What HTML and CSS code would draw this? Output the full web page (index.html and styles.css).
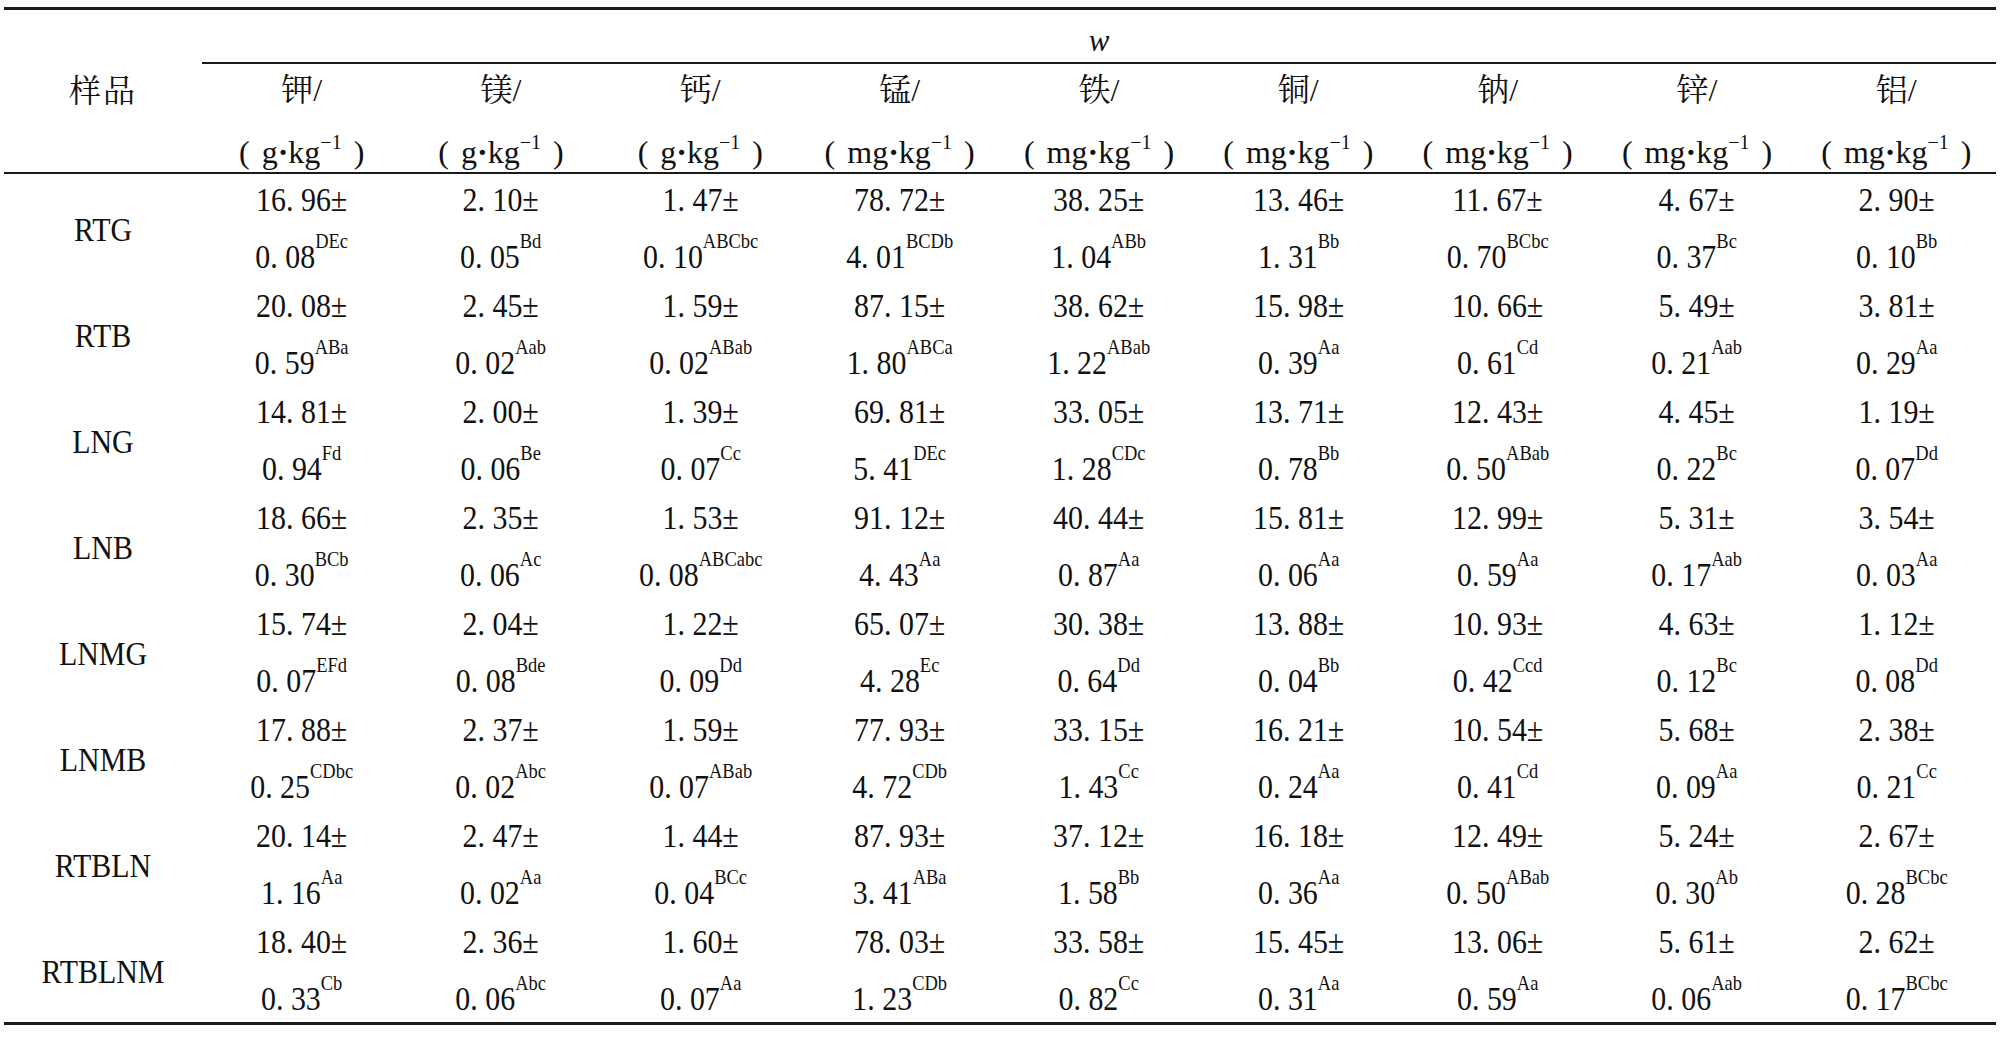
FILE: index.html
```html
<!DOCTYPE html>
<html lang="zh-CN">
<head>
<meta charset="utf-8">
<title>样品元素含量</title>
<link rel="stylesheet" href="styles.css">
</head>
<body>
<div class="tbl">
  <div class="corner">样品</div>
  <div class="wcell"><i>w</i></div>

  <div class="el">钾/</div>
  <div class="el">镁/</div>
  <div class="el">钙/</div>
  <div class="el">锰/</div>
  <div class="el">铁/</div>
  <div class="el">铜/</div>
  <div class="el">钠/</div>
  <div class="el">锌/</div>
  <div class="el">铝/</div>

  <div class="unit">( g<b class="dot">·</b>kg<sup>−1</sup> )</div>
  <div class="unit">( g<b class="dot">·</b>kg<sup>−1</sup> )</div>
  <div class="unit">( g<b class="dot">·</b>kg<sup>−1</sup> )</div>
  <div class="unit">( mg<b class="dot">·</b>kg<sup>−1</sup> )</div>
  <div class="unit">( mg<b class="dot">·</b>kg<sup>−1</sup> )</div>
  <div class="unit">( mg<b class="dot">·</b>kg<sup>−1</sup> )</div>
  <div class="unit">( mg<b class="dot">·</b>kg<sup>−1</sup> )</div>
  <div class="unit">( mg<b class="dot">·</b>kg<sup>−1</sup> )</div>
  <div class="unit">( mg<b class="dot">·</b>kg<sup>−1</sup> )</div>

  <div class="name">RTG</div>
  <div class="val"><div class="l1">16. 96±</div><div class="l2">0. 08<sup>DEc</sup></div></div>
  <div class="val"><div class="l1">2. 10±</div><div class="l2">0. 05<sup>Bd</sup></div></div>
  <div class="val"><div class="l1">1. 47±</div><div class="l2">0. 10<sup>ABCbc</sup></div></div>
  <div class="val"><div class="l1">78. 72±</div><div class="l2">4. 01<sup>BCDb</sup></div></div>
  <div class="val"><div class="l1">38. 25±</div><div class="l2">1. 04<sup>ABb</sup></div></div>
  <div class="val"><div class="l1">13. 46±</div><div class="l2">1. 31<sup>Bb</sup></div></div>
  <div class="val"><div class="l1">11. 67±</div><div class="l2">0. 70<sup>BCbc</sup></div></div>
  <div class="val"><div class="l1">4. 67±</div><div class="l2">0. 37<sup>Bc</sup></div></div>
  <div class="val"><div class="l1">2. 90±</div><div class="l2">0. 10<sup>Bb</sup></div></div>

  <div class="name">RTB</div>
  <div class="val"><div class="l1">20. 08±</div><div class="l2">0. 59<sup>ABa</sup></div></div>
  <div class="val"><div class="l1">2. 45±</div><div class="l2">0. 02<sup>Aab</sup></div></div>
  <div class="val"><div class="l1">1. 59±</div><div class="l2">0. 02<sup>ABab</sup></div></div>
  <div class="val"><div class="l1">87. 15±</div><div class="l2">1. 80<sup>ABCa</sup></div></div>
  <div class="val"><div class="l1">38. 62±</div><div class="l2">1. 22<sup>ABab</sup></div></div>
  <div class="val"><div class="l1">15. 98±</div><div class="l2">0. 39<sup>Aa</sup></div></div>
  <div class="val"><div class="l1">10. 66±</div><div class="l2">0. 61<sup>Cd</sup></div></div>
  <div class="val"><div class="l1">5. 49±</div><div class="l2">0. 21<sup>Aab</sup></div></div>
  <div class="val"><div class="l1">3. 81±</div><div class="l2">0. 29<sup>Aa</sup></div></div>

  <div class="name">LNG</div>
  <div class="val"><div class="l1">14. 81±</div><div class="l2">0. 94<sup>Fd</sup></div></div>
  <div class="val"><div class="l1">2. 00±</div><div class="l2">0. 06<sup>Be</sup></div></div>
  <div class="val"><div class="l1">1. 39±</div><div class="l2">0. 07<sup>Cc</sup></div></div>
  <div class="val"><div class="l1">69. 81±</div><div class="l2">5. 41<sup>DEc</sup></div></div>
  <div class="val"><div class="l1">33. 05±</div><div class="l2">1. 28<sup>CDc</sup></div></div>
  <div class="val"><div class="l1">13. 71±</div><div class="l2">0. 78<sup>Bb</sup></div></div>
  <div class="val"><div class="l1">12. 43±</div><div class="l2">0. 50<sup>ABab</sup></div></div>
  <div class="val"><div class="l1">4. 45±</div><div class="l2">0. 22<sup>Bc</sup></div></div>
  <div class="val"><div class="l1">1. 19±</div><div class="l2">0. 07<sup>Dd</sup></div></div>

  <div class="name">LNB</div>
  <div class="val"><div class="l1">18. 66±</div><div class="l2">0. 30<sup>BCb</sup></div></div>
  <div class="val"><div class="l1">2. 35±</div><div class="l2">0. 06<sup>Ac</sup></div></div>
  <div class="val"><div class="l1">1. 53±</div><div class="l2">0. 08<sup>ABCabc</sup></div></div>
  <div class="val"><div class="l1">91. 12±</div><div class="l2">4. 43<sup>Aa</sup></div></div>
  <div class="val"><div class="l1">40. 44±</div><div class="l2">0. 87<sup>Aa</sup></div></div>
  <div class="val"><div class="l1">15. 81±</div><div class="l2">0. 06<sup>Aa</sup></div></div>
  <div class="val"><div class="l1">12. 99±</div><div class="l2">0. 59<sup>Aa</sup></div></div>
  <div class="val"><div class="l1">5. 31±</div><div class="l2">0. 17<sup>Aab</sup></div></div>
  <div class="val"><div class="l1">3. 54±</div><div class="l2">0. 03<sup>Aa</sup></div></div>

  <div class="name">LNMG</div>
  <div class="val"><div class="l1">15. 74±</div><div class="l2">0. 07<sup>EFd</sup></div></div>
  <div class="val"><div class="l1">2. 04±</div><div class="l2">0. 08<sup>Bde</sup></div></div>
  <div class="val"><div class="l1">1. 22±</div><div class="l2">0. 09<sup>Dd</sup></div></div>
  <div class="val"><div class="l1">65. 07±</div><div class="l2">4. 28<sup>Ec</sup></div></div>
  <div class="val"><div class="l1">30. 38±</div><div class="l2">0. 64<sup>Dd</sup></div></div>
  <div class="val"><div class="l1">13. 88±</div><div class="l2">0. 04<sup>Bb</sup></div></div>
  <div class="val"><div class="l1">10. 93±</div><div class="l2">0. 42<sup>Ccd</sup></div></div>
  <div class="val"><div class="l1">4. 63±</div><div class="l2">0. 12<sup>Bc</sup></div></div>
  <div class="val"><div class="l1">1. 12±</div><div class="l2">0. 08<sup>Dd</sup></div></div>

  <div class="name">LNMB</div>
  <div class="val"><div class="l1">17. 88±</div><div class="l2">0. 25<sup>CDbc</sup></div></div>
  <div class="val"><div class="l1">2. 37±</div><div class="l2">0. 02<sup>Abc</sup></div></div>
  <div class="val"><div class="l1">1. 59±</div><div class="l2">0. 07<sup>ABab</sup></div></div>
  <div class="val"><div class="l1">77. 93±</div><div class="l2">4. 72<sup>CDb</sup></div></div>
  <div class="val"><div class="l1">33. 15±</div><div class="l2">1. 43<sup>Cc</sup></div></div>
  <div class="val"><div class="l1">16. 21±</div><div class="l2">0. 24<sup>Aa</sup></div></div>
  <div class="val"><div class="l1">10. 54±</div><div class="l2">0. 41<sup>Cd</sup></div></div>
  <div class="val"><div class="l1">5. 68±</div><div class="l2">0. 09<sup>Aa</sup></div></div>
  <div class="val"><div class="l1">2. 38±</div><div class="l2">0. 21<sup>Cc</sup></div></div>

  <div class="name">RTBLN</div>
  <div class="val"><div class="l1">20. 14±</div><div class="l2">1. 16<sup>Aa</sup></div></div>
  <div class="val"><div class="l1">2. 47±</div><div class="l2">0. 02<sup>Aa</sup></div></div>
  <div class="val"><div class="l1">1. 44±</div><div class="l2">0. 04<sup>BCc</sup></div></div>
  <div class="val"><div class="l1">87. 93±</div><div class="l2">3. 41<sup>ABa</sup></div></div>
  <div class="val"><div class="l1">37. 12±</div><div class="l2">1. 58<sup>Bb</sup></div></div>
  <div class="val"><div class="l1">16. 18±</div><div class="l2">0. 36<sup>Aa</sup></div></div>
  <div class="val"><div class="l1">12. 49±</div><div class="l2">0. 50<sup>ABab</sup></div></div>
  <div class="val"><div class="l1">5. 24±</div><div class="l2">0. 30<sup>Ab</sup></div></div>
  <div class="val"><div class="l1">2. 67±</div><div class="l2">0. 28<sup>BCbc</sup></div></div>

  <div class="name">RTBLNM</div>
  <div class="val"><div class="l1">18. 40±</div><div class="l2">0. 33<sup>Cb</sup></div></div>
  <div class="val"><div class="l1">2. 36±</div><div class="l2">0. 06<sup>Abc</sup></div></div>
  <div class="val"><div class="l1">1. 60±</div><div class="l2">0. 07<sup>Aa</sup></div></div>
  <div class="val"><div class="l1">78. 03±</div><div class="l2">1. 23<sup>CDb</sup></div></div>
  <div class="val"><div class="l1">33. 58±</div><div class="l2">0. 82<sup>Cc</sup></div></div>
  <div class="val"><div class="l1">15. 45±</div><div class="l2">0. 31<sup>Aa</sup></div></div>
  <div class="val"><div class="l1">13. 06±</div><div class="l2">0. 59<sup>Aa</sup></div></div>
  <div class="val"><div class="l1">5. 61±</div><div class="l2">0. 06<sup>Aab</sup></div></div>
  <div class="val"><div class="l1">2. 62±</div><div class="l2">0. 17<sup>BCbc</sup></div></div>
</div>
</body>
</html>
```

FILE: styles.css
```css
html, body {
  background: #ffffff;
}
body {
  margin: 7px 4px 0 4px;
  font-family: "Liberation Serif", "Noto Serif CJK SC", "Noto Sans CJK SC", serif;
  font-size: 31px;
  color: #111111;
}
.tbl {
  width: 1992px;
  display: grid;
  grid-template-columns: 198px repeat(9, 1fr);
  grid-template-rows: 54px 54px 56px;
  grid-auto-rows: 106px;
  border-top: 3px solid #1a1a1a;
  border-bottom: 3px solid #1a1a1a;
}
.corner {
  grid-column: 1;
  grid-row: 1 / span 3;
  display: flex;
  align-items: center;
  justify-content: center;
  border-bottom: 2px solid #1a1a1a;
  font-family: "Noto Serif CJK SC", "Noto Sans CJK SC", serif;
  font-size: 32px;
  letter-spacing: 2px;
  padding-bottom: 6px;
  box-sizing: border-box;
}
.wcell {
  grid-column: 2 / -1;
  grid-row: 1;
  box-sizing: border-box;
  padding-top: 10px;
  line-height: 42px;
  text-align: center;
  border-bottom: 2px solid #1a1a1a;
}
.wcell i {
  font-style: italic;
}
.el {
  grid-row: 2;
  line-height: 52px;
  text-align: center;
  font-size: 32px;
}
.unit {
  grid-row: 3;
  box-sizing: border-box;
  padding-top: 14px;
  line-height: 40px;
  text-align: center;
  border-bottom: 2px solid #1a1a1a;
  white-space: nowrap;
  font-size: 32px;
  word-spacing: 4px;
}
.unit .dot {
  font-weight: bold;
}
.unit sup {
  font-size: 20px;
  line-height: 0;
  vertical-align: 14px;
}
.name {
  display: flex;
  align-items: center;
  justify-content: center;
  padding-top: 6px;
  box-sizing: border-box;
  font-size: 34px;
  transform: scaleX(0.88);
}
.val {
  text-align: center;
  white-space: nowrap;
  font-size: 34px;
}
.l1 {
  height: 52px;
  line-height: 52px;
  transform: scaleX(0.88);
}
.l2 {
  height: 52px;
  margin-top: 5px;
  line-height: 52px;
  transform: scaleX(0.88);
}
.l2 sup {
  font-size: 21px;
  line-height: 0;
  vertical-align: 20px;
}
```
